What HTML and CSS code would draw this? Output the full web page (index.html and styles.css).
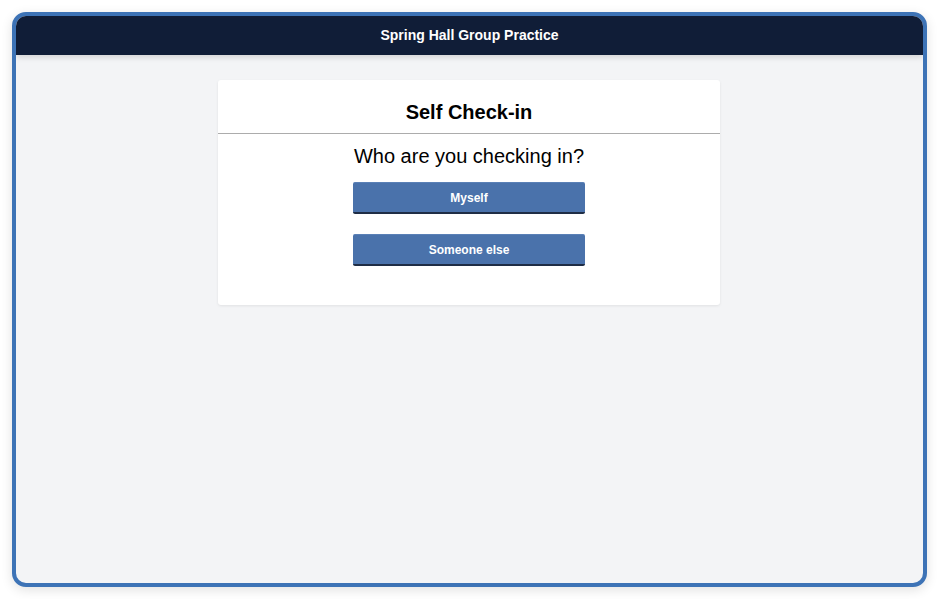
FILE: index.html
```html
<!DOCTYPE html>
<html>
<head>
<meta charset="utf-8">
<link rel="stylesheet" href="styles.css">
</head>
<body>
<div class="frame">
  <header class="topbar">Spring Hall Group Practice</header>
  <main class="content">
    <section class="card">
      <h1 class="card-title">Self Check-in</h1>
      <div class="card-body">
        <p class="question">Who are you checking in?</p>
        <button class="btn">Myself</button>
        <button class="btn">Someone else</button>
      </div>
    </section>
  </main>
</div>
</body>
</html>
```
FILE: styles.css
```css
* { box-sizing: border-box; }
html, body { margin: 0; padding: 0; background: #ffffff; }
body {
  padding: 12px;
  font-family: "Liberation Sans", Arial, sans-serif;
}
.frame {
  width: 915px;
  height: 575px;
  border: 4px solid #3d73b6;
  border-radius: 14px;
  background: #f3f4f6;
  overflow: hidden;
  display: flex;
  flex-direction: column;
  box-shadow: 0 3px 12px rgba(0,0,0,0.12);
}
.topbar {
  height: 39px;
  flex: none;
  padding-bottom: 1px;
  background: #101d37;
  color: #ffffff;
  font-weight: bold;
  font-size: 14px;
  display: flex;
  align-items: center;
  justify-content: center;
  box-shadow: 0 2px 6px rgba(0,0,0,0.15);
  position: relative;
  z-index: 1;
}
.content {
  flex: 1;
  display: flex;
  justify-content: center;
  align-items: flex-start;
  padding-top: 25px;
  padding-right: 1px;
}
.card {
  width: 502px;
  background: #ffffff;
  border-radius: 3px;
  box-shadow: 0 1px 3px rgba(0,0,0,0.08);
}
.card-title {
  margin: 0;
  height: 54px;
  display: flex;
  align-items: center;
  justify-content: center;
  padding-top: 12px;
  font-size: 20px;
  font-weight: bold;
  color: #000;
  border-bottom: 1px solid #acacac;
}
.card-body {
  display: flex;
  flex-direction: column;
  align-items: center;
  padding: 11px 0 39px;
}
.question {
  margin: 0 0 14px;
  font-size: 20px;
  line-height: 23px;
  color: #000;
}
.btn {
  width: 232px;
  height: 32px;
  border: none;
  border-top: 1px solid #5a80b6;
  border-bottom: 2px solid #1f2d45;
  border-radius: 2px;
  background: #4a72ab;
  color: #ffffff;
  font-family: "Liberation Sans", Arial, sans-serif;
  font-weight: bold;
  font-size: 12px;
  padding: 0;
}
.btn + .btn { margin-top: 20px; }
```
